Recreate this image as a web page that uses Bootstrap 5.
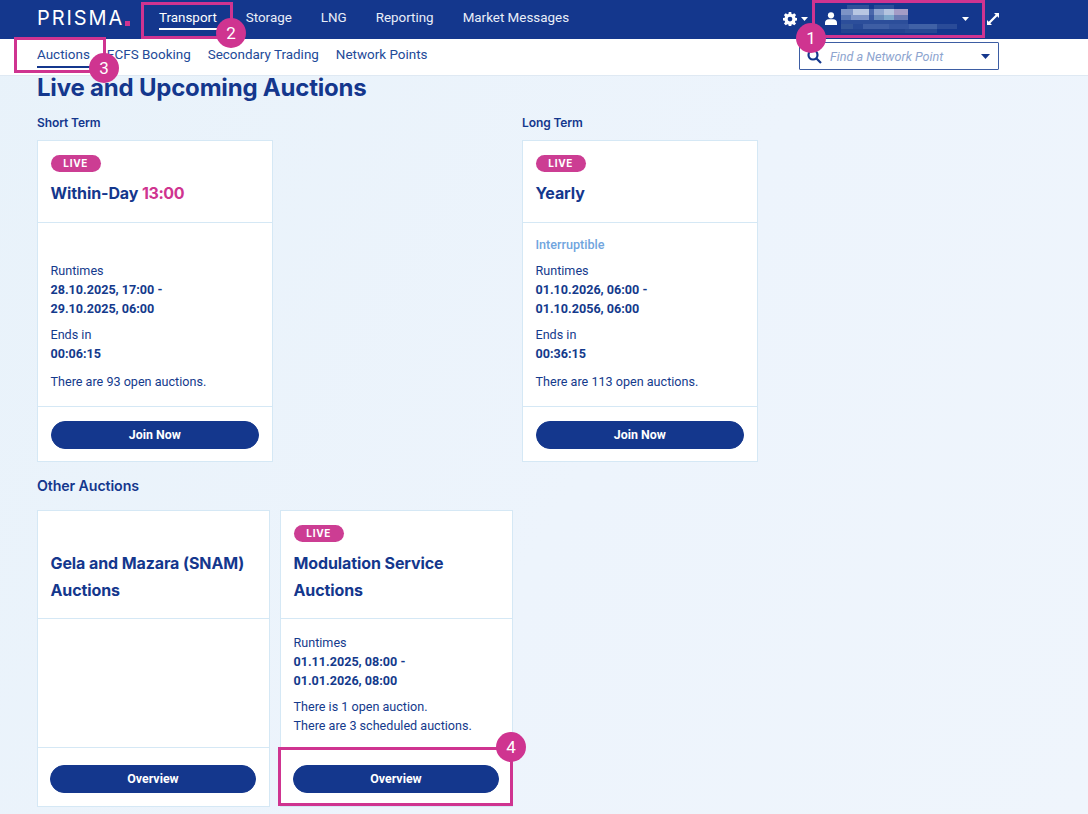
<!DOCTYPE html>
<html lang="en">
<head>
    <meta charset="UTF-8">
    <meta name="viewport" content="width=device-width, initial-scale=1.0">
    <title>PRISMA Auctions</title>
    <link href="https://cdn.jsdelivr.net/npm/bootstrap@5.3.0/dist/css/bootstrap.min.css" rel="stylesheet">
    <style>
        html, body { height: 100%; }
        body {
            font-family: Roboto, "Liberation Sans", sans-serif;
            font-size: 12.6px;
            line-height: 19px;
            color: #143a8c;
            background: linear-gradient(120deg, #e8f2fa 0%, #edf4fc 55%, #eff5fc 100%);
            position: relative;
            overflow: hidden;
        }
        .top-bar { height: 39px; background: #14378d; padding-left: 37px; }
        .brand-name { font-family: Inter, sans-serif; font-size: 20px; font-weight: 400; letter-spacing: 1.9px; line-height: 24px; color: #fff; width: 122px; margin-top: -4px; position: relative; }
        .brand-name i { position: absolute; left: 88px; top: 15px; width: 5px; height: 5px; background: #cf3490; }
        .top-link { align-self: flex-start; color: #e9eef8; font-size: 13.4px; text-decoration: none; margin-right: 29px; padding: 8px 0 0; border-bottom: 2px solid transparent; line-height: 20px; }
        .top-link.on { color: #fff; border-bottom-color: #fff; }
        .top-tools { padding-bottom: 2px; }
        .user-box { width: 174px; height: 37px; padding-left: 13px; }
        .name-blur { filter: blur(.6px); }
        .expand-ico { margin: 0 89px 0 1px; }
        .sub-bar { height: 37px; background: #fff; padding-left: 37px; border-bottom: 1px solid #dfe9f3; }
        .sub-link { align-self: flex-start; color: #234a98; font-size: 13.45px; text-decoration: none; margin-right: 17px; line-height: 20px; padding: 6px 0 1px; border-bottom: 2px solid transparent; }
        .sub-link.on { border-bottom-color: #14378d; }
        .find-box { width: 200px; height: 28px; border: 1px solid #3d5da3; border-radius: 1px; margin-right: 89px; margin-top: 3px; padding: 0 8px 0 7px; }
        .find-box em { color: #8ea5cf; font-size: 12.6px; }
        .page-main { padding: 0 0 0 37px; }
        .page-title { font-family: Inter, sans-serif; font-weight: 700; font-size: 24px; line-height: 24px; color: #14378d; margin: 0; letter-spacing: -.2px; }
        .group-label { font-family: Inter, sans-serif; font-weight: 600; font-size: 12px; line-height: 16px; color: #14378d; margin: 15px 0 9px; letter-spacing: -.1px; }
        .other-label { font-size: 14.2px; margin: 16px 0 16px; line-height: 16px; }
        .term-col { width: 485px; }
        .auction-card { border: 1px solid #d5e8f5; border-radius: 0; background: #fff; color: #143a8c; }
        .auction-card .card-header { background: #fff; border-bottom: 1px solid #d5e8f5; border-radius: 0; padding: 14px 12.5px 0; }
        .auction-card .card-body { padding: 0 12.5px; flex: 1 1 auto; }
        .auction-card .card-footer { background: #fff; border-top: 1px solid #d5e8f5; border-radius: 0; padding: 14px 12.5px 0; }
        .short-card { width: 236px; height: 322px; }
        .short-card .card-header { height: 82px; }
        .short-card .card-body { padding: 12px 13px 0 12.5px; }
        .short-card .card-footer { height: 55px; padding-right: 13px; }
        .other-card { width: 233px; height: 297px; }
        .other-card .card-header { height: 108px; }
        .other-card .card-body { padding-top: 14px; }
        .other-card .card-footer { height: 59px; padding: 17px 13px 0 12px; }
        .other-card + .other-card { margin-left: 10px; }
        .live-pill { display: block; width: 50.5px; height: 16.5px; line-height: 16px; font-family: Inter, sans-serif; font-size: 10px; font-weight: 700; letter-spacing: .7px; text-align: center; color: #fff; background: #cc3d93; border-radius: 9px; margin-bottom: 8.5px; }
        .pill-blank { height: 25px; }
        .card-heading { font-family: Inter, sans-serif; font-weight: 700; font-size: 16px; line-height: 27px; color: #14378d; margin: 0; letter-spacing: -.1px; }
        .card-heading span { color: #cf3490; letter-spacing: -.4px; }
        .note-blue { color: #71a5de; font-weight: 500; height: 26px; }
        .spacer-line { height: 26px; }
        .gap-after { margin-bottom: 7px; }
        .gap-last { margin-bottom: 9px; }
        .join-btn { display: block; width: 100%; height: 28px; line-height: 26px; padding: 0; font-size: 12.4px; font-weight: 700; color: #fff; background: #14378d; border: 1px solid #14378d; border-radius: 14px; }
        .join-btn:hover { color: #fff; background: #14378d; }
        .mark-box { position: absolute; border: 3px solid #cf3490; pointer-events: none; }
        .mark-dot { position: absolute; width: 30px; height: 30px; border-radius: 50%; background: #cf3490; color: #fff; font-size: 17px; line-height: 30px; text-align: center; font-family: Roboto, sans-serif; }
    </style>
</head>
<body>
    <nav class="top-bar d-flex align-items-center">
        <div class="brand-name">PRISMA<i></i></div>
        <a class="top-link on" href="#">Transport</a>
        <a class="top-link" href="#">Storage</a>
        <a class="top-link" href="#">LNG</a>
        <a class="top-link" href="#">Reporting</a>
        <a class="top-link" href="#">Market Messages</a>
        <div class="top-tools ms-auto d-flex align-items-center">
            <svg width="14" height="14" viewBox="0 0 16 16" fill="#fff"><path fill-rule="evenodd" d="M6.6 0h2.8l.4 2.2 1.2.5L12.9 1.400l2 2-1.300 1.900.5 1.200 2.200.4v2.800l-2.200.4-.5 1.200 1.300 1.900-2 2-1.900-1.300-1.200.5-.4 2.200H6.600l-.4-2.200-1.200-.5-1.900 1.300-2-2 1.300-1.900-.5-1.200L-.3 9.700V6.900l2.200-.4.5-1.200L1.100 3.400l2-2L5 2.700l1.200-.5zM8 5.400a2.700 2.700 0 1 0 0 5.400 2.700 2.700 0 0 0 0-5.400z"/></svg>
            <svg class="ms-1" width="7" height="4" viewBox="0 0 7 4" fill="#fff"><path d="M0 0h7L3.500 4z"/></svg>
            <div class="user-box d-flex align-items-center ms-1">
                <svg width="12" height="13" viewBox="0 0 12 13" fill="#fff"><circle cx="6" cy="3.300" r="3.100"/><path d="M0 13v-2.200C0 8.600 1.800 7.200 3.600 7.200h4.800c1.800 0 3.600 1.400 3.600 3.600V13z"/></svg>
                <svg class="name-blur ms-1" width="117" height="28" viewBox="0 0 117 28">
                    <rect x="6" y="0" width="22" height="4" fill="#2f5099"/><rect x="33" y="0" width="20" height="4" fill="#2c4d98"/>
                    <rect x="0" y="4" width="12" height="6" fill="#7d93c6"/><rect x="12" y="4" width="16" height="6" fill="#b8c6e2"/><rect x="28" y="4" width="5" height="6" fill="#4a68ab"/><rect x="33" y="4" width="10" height="6" fill="#8fa5cf"/><rect x="43" y="4" width="10" height="6" fill="#b4c4df"/><rect x="53" y="4" width="14" height="6" fill="#a49cc6"/>
                    <rect x="0" y="10" width="10" height="5" fill="#5a77b5"/><rect x="10" y="10" width="18" height="5" fill="#7f95c8"/><rect x="28" y="10" width="5" height="5" fill="#3a5aa2"/><rect x="33" y="10" width="10" height="5" fill="#6a8cbc"/><rect x="43" y="10" width="10" height="5" fill="#7fa8cc"/><rect x="53" y="10" width="14" height="5" fill="#6c7cb5"/>
                    <rect x="0" y="15" width="67" height="4" fill="#2c4e9a"/>
                    <rect x="0" y="19" width="12" height="5" fill="#345699"/><rect x="12" y="19" width="10" height="5" fill="#274996"/><rect x="22" y="19" width="26" height="5" fill="#3e5ea4"/><rect x="48" y="19" width="20" height="5" fill="#34559f"/><rect x="68" y="19" width="28" height="5" fill="#4061a6"/><rect x="96" y="19" width="20" height="5" fill="#2a4b98"/>
                    <rect x="0" y="24" width="64" height="4" fill="#21438f"/><rect x="64" y="24" width="32" height="4" fill="#264893"/>
                </svg>
                <svg class="ms-1" width="7" height="4" viewBox="0 0 7 4" fill="#fff"><path d="M0 0h7L3.500 4z"/></svg>
            </div>
            <svg class="expand-ico" width="12" height="12" viewBox="0 0 12 12" fill="#fff"><path d="M7 0h5v5l-1.700-1.700-7 7L5 12H0V7l1.700 1.700 7-7z"/></svg>
        </div>
    </nav>
    <div class="sub-bar d-flex">
        <a class="sub-link on" href="#">Auctions</a>
        <a class="sub-link" href="#">ECFS Booking</a>
        <a class="sub-link" href="#">Secondary Trading</a>
        <a class="sub-link" href="#">Network Points</a>
        <div class="find-box ms-auto d-flex align-items-center">
            <svg width="15" height="15" viewBox="0 0 15 15" fill="none" stroke="#14378d" stroke-width="2.200"><circle cx="6" cy="6" r="4.500"/><path d="M9.500 9.500 14 14"/></svg>
            <em class="ms-2">Find a Network Point</em>
            <svg class="ms-auto" width="9" height="5" viewBox="0 0 9 5" fill="#14378d"><path d="M0 0h9L4.500 5z"/></svg>
        </div>
    </div>

    <main class="page-main">
        <h1 class="page-title">Live and Upcoming Auctions</h1>
        <div class="d-flex">
            <section class="term-col">
                <div class="group-label">Short Term</div>
                <div class="card auction-card short-card">
                    <div class="card-header">
                        <span class="live-pill">LIVE</span>
                        <h2 class="card-heading">Within-Day <span>13:00</span></h2>
                    </div>
                    <div class="card-body">
                        <div class="spacer-line"></div>
                        <div class="gap-after">
                            <div>Runtimes</div>
                            <strong>28.10.2025, 17:00 -<br>29.10.2025, 06:00</strong>
                        </div>
                        <div class="gap-last">
                            <div>Ends in</div>
                            <strong>00:06:15</strong>
                        </div>
                        <div>There are 93 open auctions.</div>
                    </div>
                    <div class="card-footer"><button class="btn join-btn">Join Now</button></div>
                </div>
            </section>
            <section class="term-col">
                <div class="group-label">Long Term</div>
                <div class="card auction-card short-card">
                    <div class="card-header">
                        <span class="live-pill">LIVE</span>
                        <h2 class="card-heading">Yearly</h2>
                    </div>
                    <div class="card-body">
                        <div class="note-blue">Interruptible</div>
                        <div class="gap-after">
                            <div>Runtimes</div>
                            <strong>01.10.2026, 06:00 -<br>01.10.2056, 06:00</strong>
                        </div>
                        <div class="gap-last">
                            <div>Ends in</div>
                            <strong>00:36:15</strong>
                        </div>
                        <div>There are 113 open auctions.</div>
                    </div>
                    <div class="card-footer"><button class="btn join-btn">Join Now</button></div>
                </div>
            </section>
        </div>

        <div class="group-label other-label">Other Auctions</div>
        <div class="d-flex">
            <div class="card auction-card other-card">
                <div class="card-header">
                    <div class="pill-blank"></div>
                    <h2 class="card-heading">Gela and Mazara (SNAM) Auctions</h2>
                </div>
                <div class="card-body"></div>
                <div class="card-footer"><button class="btn join-btn">Overview</button></div>
            </div>
            <div class="card auction-card other-card">
                <div class="card-header">
                    <span class="live-pill">LIVE</span>
                    <h2 class="card-heading">Modulation Service Auctions</h2>
                </div>
                <div class="card-body">
                    <div class="gap-after">
                        <div>Runtimes</div>
                        <strong>01.11.2025, 08:00 -<br>01.01.2026, 08:00</strong>
                    </div>
                    <div>There is 1 open auction.<br>There are 3 scheduled auctions.</div>
                </div>
                <div class="card-footer"><button class="btn join-btn">Overview</button></div>
            </div>
        </div>
    </main>

    <div class="mark-box" style="left:812px;top:0;width:173px;height:38px"></div>
    <div class="mark-dot" style="left:796px;top:23px">1</div>
    <div class="mark-box" style="left:141px;top:2px;width:92px;height:37px"></div>
    <div class="mark-dot" style="left:216px;top:18px">2</div>
    <div class="mark-box" style="left:14px;top:37px;width:92px;height:36px"></div>
    <div class="mark-dot" style="left:89px;top:53px">3</div>
    <div class="mark-box" style="left:278px;top:747px;width:235px;height:59px"></div>
    <div class="mark-dot" style="left:496px;top:732px">4</div>

    <script src="https://cdn.jsdelivr.net/npm/bootstrap@5.3.0/dist/js/bootstrap.bundle.min.js"></script>
</body>
</html>
